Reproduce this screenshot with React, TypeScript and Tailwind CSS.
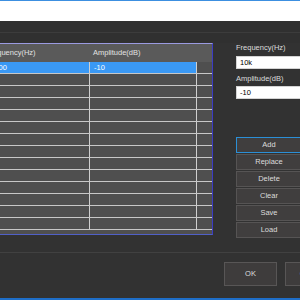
import React from "react";

const rows = Array.from({ length: 14 }, (_, i) =>
  i === 0 ? { freq: "10000", amp: "-10" } : { freq: "", amp: "" }
);

const buttons = ["Add", "Replace", "Delete", "Clear", "Save", "Load"];

export default function App() {
  return (
    <div
      className="w-[300px] h-[300px] overflow-hidden bg-[#323232] flex flex-col text-[7.5px] text-[#dcdcdc]"
      style={{ fontFamily: '"Liberation Sans", Arial, sans-serif' }}
    >
      <div className="h-px bg-[#3c8fe0] shrink-0" />
      <div className="h-[20px] bg-white shrink-0" />
      <div className="h-[22px] shrink-0 flex flex-col bg-[#303030]">
        <div className="h-[11px]" />
        <div className="h-px bg-[#3c3c3c]" />
      </div>

      <div className="flex items-start shrink-0">
        {/* table */}
        <div className="ml-[-17px] w-[230px] h-[192px] shrink-0 flex flex-col overflow-hidden border-t border-t-[#9a9ae0] border-r border-r-[#3c3cc4] border-b border-b-[#5060c8] bg-[#4f4f4f]">
          <div className="h-[18px] shrink-0 flex items-center bg-[#5a5a5a] text-[#e2e2e2]">
            <div className="w-[107px] pl-[3px] whitespace-nowrap">Frequency(Hz)</div>
            <div className="w-[106px] pl-[3px] whitespace-nowrap">Amplitude(dB)</div>
          </div>
          {rows.map((r, i) => (
            <div key={i} className="h-[12px] shrink-0 flex border-b border-b-[#c8c8c8]">
              <div
                className={`w-[106px] pl-[3px] leading-[11px] whitespace-nowrap ${
                  i === 0 ? "bg-[#3a99f5] text-white" : ""
                }`}
              >
                {r.freq}
              </div>
              <div className="w-px bg-[#cfcfcf]" />
              <div
                className={`w-[106px] pl-[4px] leading-[11px] whitespace-nowrap ${
                  i === 0 ? "bg-[#3a99f5] text-white" : ""
                }`}
              >
                {r.amp}
              </div>
              <div className="w-px bg-[#cfcfcf]" />
              <div className="w-[15px]" />
            </div>
          ))}
        </div>

        {/* right panel */}
        <div className="ml-[23px] w-[66px] shrink-0 flex flex-col">
          <div className="h-[9px] leading-[9px] whitespace-nowrap">Frequency(Hz)</div>
          <div className="mt-[4px] h-[13px] bg-white border border-[#d4d4d4] pl-[3px] leading-[11px] text-black">
            10k
          </div>
          <div className="mt-[5px] h-[9px] leading-[9px] whitespace-nowrap">Amplitude(dB)</div>
          <div className="mt-[3px] h-[13px] bg-white border border-[#d4d4d4] pl-[3px] leading-[11px] text-black">
            -10
          </div>
          <div className="mt-[38px] flex flex-col gap-[1px]">
            {buttons.map((b, i) => (
              <div
                key={b}
                className={`h-[16px] flex items-center justify-center bg-[#403e3e] border ${
                  i === 0 ? "border-[#2b8fd6]" : "border-[#565454]"
                }`}
              >
                {b}
              </div>
            ))}
          </div>
        </div>
      </div>

      <div className="mt-[14px] h-px bg-[#414141] shrink-0" />

      <div className="mt-[9px] flex gap-[8px] ml-[224px] shrink-0">
        <div className="w-[53px] h-[24px] shrink-0 flex items-center justify-center bg-[#3e3c3c] border border-[#585656]">
          OK
        </div>
        <div className="w-[53px] h-[24px] shrink-0 flex items-center justify-center bg-[#3e3c3c] border border-[#585656]">
          Cancel
        </div>
      </div>

      <div className="mt-[12px] h-[2px] bg-[#1e6ec8] shrink-0" />
    </div>
  );
}
